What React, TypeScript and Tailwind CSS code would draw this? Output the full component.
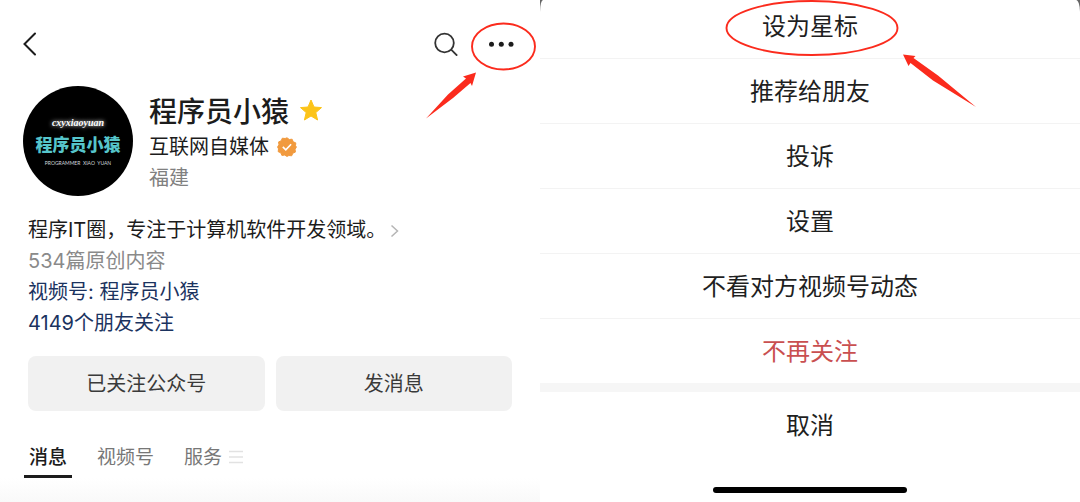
import { useState } from 'react'
import clsx from 'clsx'

type SheetAction = {
  label: string
  danger?: boolean
  highlighted?: boolean
}

const actions: SheetAction[] = [
  { label: '设为星标', highlighted: true },
  { label: '推荐给朋友' },
  { label: '投诉' },
  { label: '设置' },
  { label: '不看对方视频号动态' },
  { label: '不再关注', danger: true },
]

const tabs = ['消息', '视频号', '服务']

function VerifiedBadge() {
  return (
    <svg viewBox="0 0 20 20" className="w-5 h-5" aria-hidden="true">
      <path
        d="M10 .8l2.3 1.7 2.8-.3 1.1 2.6 2.6 1.1-.3 2.8L19.4 10l-1.3 2.3.3 2.8-2.6 1.1-1.1 2.6-2.8-.3L10 19.4l-2.3-1.3-2.8.3-1.1-2.6-2.6-1.1.3-2.8L.6 10l1.3-2.3-.3-2.8 2.6-1.1 1.1-2.6 2.8.3z"
        fill="#f19a3e"
        stroke="#f19a3e"
        strokeLinejoin="round"
      />
      <path d="M5.8 9.9l3 3 5.3-5.6" fill="none" stroke="#fff" strokeWidth="1.6" />
    </svg>
  )
}

function Avatar() {
  return (
    <div className="w-[110px] h-[110px] shrink-0 rounded-full bg-black flex flex-col gap-0.5 items-center justify-center text-white">
      <span className="text-[10px] leading-4 italic font-bold font-['Liberation_Serif',serif] [text-shadow:0_0_4px_#fff]">
        cxyxiaoyuan
      </span>
      <span className="text-[17px] leading-6 font-black text-[#56c5cb]">程序员小猿</span>
      <span className="text-[5px] leading-2 whitespace-nowrap font-[Lato,sans-serif] text-gray-300">
        PROGRAMMER&nbsp; XIAO&nbsp; YUAN
      </span>
    </div>
  )
}

function Profile() {
  const [tab, setTab] = useState('消息')

  return (
    <section className="px-7 pt-8 bg-white text-[#1c1c1c]">
      <header className="flex items-center justify-between pb-[30px]">
        <button aria-label="返回" className="-ml-2">
          <svg viewBox="0 0 24 24" className="w-6 h-6" fill="none" stroke="#1c1c1c" strokeWidth="2" strokeLinecap="round">
            <path d="M15 1.5L4.5 12 15 22.5" />
          </svg>
        </button>
        <div className="flex items-center gap-[26px]">
          <button aria-label="搜索">
            <svg viewBox="0 0 24 24" className="w-6 h-6" fill="none" stroke="#333" strokeWidth="1.8">
              <circle cx="10.5" cy="11" r="9.3" />
              <path d="M17.2 17.7l6 6" />
            </svg>
          </button>
          <button aria-label="更多" className="relative">
            <svg viewBox="0 0 28 24" className="w-7 h-6 overflow-visible" fill="#1c1c1c">
              <circle cx="7.5" cy="12.3" r="2.5" />
              <circle cx="17.3" cy="12.3" r="2.5" />
              <circle cx="27" cy="12.3" r="2.5" />
            </svg>
            <svg
              viewBox="0 0 114 100"
              className="absolute -left-15 -top-3 w-[114px] h-[100px] max-w-none pointer-events-none"
              aria-hidden="true"
            >
              <ellipse cx="79.5" cy="26.5" rx="31.5" ry="23" fill="none" stroke="#fb2b1d" strokeWidth="1.9" />
              <path d="M52 52.5L39 56.5l3 2L24 74.500 2 98.500 29 78 46.500 63 48 66z" fill="#fb2b1d" />
            </svg>
          </button>
        </div>
      </header>

      <div className="flex items-center gap-4 -ml-[5px]">
        <Avatar />
        <div className="pt-[5px]">
          <h1 className="flex items-center gap-[10px] text-[28px] leading-[38px] font-medium">
            程序员小猿
            <svg viewBox="0 0 24 24" className="w-6 h-6 -mt-1" fill="#fcc419" stroke="#fcc419" strokeLinejoin="round" aria-hidden="true">
              <path d="M12 2l3 7 7.5.6-5.7 5 1.8 7.4-6.6-4-6.6 4 1.8-7.4-5.7-5L9 9z" />
            </svg>
          </h1>
          <p className="flex items-center gap-2 text-xl leading-8">
            互联网自媒体
            <VerifiedBadge />
          </p>
          <p className="text-xl leading-[31px] text-[#808080]">福建</p>
        </div>
      </div>

      <div className="mt-[19px] text-xl leading-[31px]">
        <p className="flex items-center gap-1 whitespace-nowrap">
          程序IT圈，专注于计算机软件开发领域。
          <svg viewBox="0 0 10 16" className="w-[10px] h-4" fill="none" stroke="#b5b5b5" strokeWidth="1.5" aria-hidden="true">
            <path d="M1.5 2.5l6 5.5-6 5.5" />
          </svg>
        </p>
        <p className="text-[#8a8a8a]">534篇原创内容</p>
        <p>
          <a href="#channel" className="text-[#1b335f]">视频号: 程序员小猿</a>
        </p>
        <p>
          <a href="#friends" className="text-[#1b335f]">4149个朋友关注</a>
        </p>
      </div>

      <div className="mt-[17px] grid grid-cols-2 gap-[11px] text-xl text-[#3a3a3a]">
        <button className="h-[55px] rounded-lg bg-[#f1f1f1]">已关注公众号</button>
        <button className="h-[55px] rounded-lg bg-[#f1f1f1]">发消息</button>
      </div>

      <div className="mt-8 -ml-1 flex items-center gap-5">
        {tabs.map((name) => (
          <button
            key={name}
            onClick={() => setTab(name)}
            className={clsx(
              'px-[5px] pb-0.5 border-b-3 text-[19px] leading-[30px]',
              tab === name ? 'border-[#1c1c1c] font-medium' : 'border-transparent text-[#777]'
            )}
          >
            {name}
          </button>
        ))}
        <svg viewBox="0 0 14 14" className="w-[14px] h-[14px] -ml-4.5 -mt-2" fill="none" stroke="#e2e2e2" strokeWidth="1.5" aria-hidden="true">
          <path d="M0 1.5h14M0 7h14M0 12.5h14" />
        </svg>
      </div>
      <div className="-mx-7 h-6 bg-linear-to-b from-white to-[#f9f9f9]" />
    </section>
  )
}

function ActionSheet() {
  return (
    <section className="bg-[#666]">
      <div className="h-full flex flex-col bg-white rounded-[3px_4px_0_0/12px_12px_0_0] text-2xl text-[#1f1f1f]">
        <ul className="-mt-[7px] pt-px">
          {actions.map((action, i) => (
            <li key={action.label} className={clsx(i > 0 && 'border-t border-[#f3f3f3]')}>
              <button
                className={clsx(
                  'relative block w-full leading-8 pt-[17px] pb-[15px]',
                  action.danger && 'text-[#c94f50]'
                )}
              >
                {action.label}
                {action.highlighted && (
                  <svg
                    viewBox="0 0 252 108"
                    className="absolute left-1/2 top-[6px] -ml-[85px] w-[252px] h-[108px] max-w-none pointer-events-none z-10"
                    aria-hidden="true"
                  >
                    <ellipse cx="87" cy="28" rx="85.5" ry="27" fill="none" stroke="#fb2b1d" strokeWidth="1.9" />
                    <path d="M178 54.5l12.5 1.5-2 2L213 75.500l38 31.500-43-26.500L185.500 63l-2 3z" fill="#fb2b1d" />
                  </svg>
                )}
              </button>
            </li>
          ))}
        </ul>
        <div className="h-[9px] bg-[#f6f6f6]" />
        <button className="block w-full leading-8 pt-[18px] pb-[15px]">取消</button>
        <div className="mt-[30px] mx-auto w-[36%] h-[6px] rounded-full bg-black" />
      </div>
    </section>
  )
}

export default function App() {
  return (
    <main className="grid grid-cols-2 overflow-hidden font-[Inter,'Noto_Sans_CJK_SC',sans-serif]">
      <Profile />
      <ActionSheet />
    </main>
  )
}
